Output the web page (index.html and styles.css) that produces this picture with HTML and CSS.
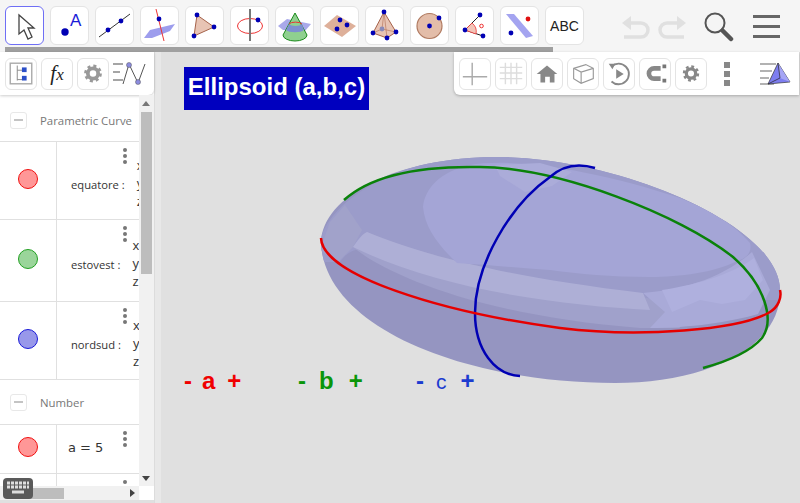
FILE: index.html
```html
<!DOCTYPE html>
<html lang="en">
<head>
    <meta charset="UTF-8">
    <title>Ellipsoid (a,b,c)</title>
    <link rel="stylesheet" href="styles.css">
</head>

<body>
    <div class="app">
        <div class="topbar">
            <div class="tool-area">
                <div class="tools">
                    <div class="tool tool-active">
                        <svg viewBox="0 0 39 39"><path d="M14 9 L14 28 L19 24 L23 33 L27 31 L23 22 L29 22 Z" fill="#fff" stroke="#444" stroke-width="1.3"/></svg>
                    </div>
                    <div class="tool">
                        <svg viewBox="0 0 39 39"><circle cx="15" cy="26" r="3.7" fill="#0000b4"/><text x="20" y="20" class="tool-a">A</text></svg>
                    </div>
                    <div class="tool">
                        <svg viewBox="0 0 39 39"><path d="M4 31 L35 8" stroke="#333" fill="none"/><circle cx="13" cy="24" r="2.4" fill="#0000b4"/><circle cx="26" cy="15" r="2.4" fill="#0000b4"/></svg>
                    </div>
                    <div class="tool">
                        <svg viewBox="0 0 39 39"><path d="M4 32 L10 24 L35 18 L30 25 L12 32 Z" fill="#9d9ded"/><path d="M16 3 L24 35" stroke="#e33" fill="none"/><circle cx="19" cy="13" r="2.4" fill="#0000b4"/></svg>
                    </div>
                    <div class="tool">
                        <svg viewBox="0 0 39 39"><path d="M12 9 L29 21 L9 30 Z" fill="#e8c4b4" stroke="#a5624a"/><circle cx="12" cy="9" r="2.4" fill="#0000b4"/><circle cx="29" cy="21" r="2.4" fill="#0000b4"/><circle cx="9" cy="30" r="2.4" fill="#0000b4"/></svg>
                    </div>
                    <div class="tool">
                        <svg viewBox="0 0 39 39"><ellipse cx="20" cy="20" rx="12.5" ry="7.5" fill="none" stroke="#e33"/><path d="M20 3 V35" stroke="#777" stroke-width="2"/><circle cx="28" cy="14" r="2.4" fill="#0000b4"/></svg>
                    </div>
                    <div class="tool">
                        <svg viewBox="0 0 39 39"><path d="M3 20 L12 13 L36 18 L30 25 L8 24 Z" fill="#a9a9ea"/><path d="M20 7 L32 29 A12 6 0 0 1 8 29 Z" fill="#8fd08f" stroke="#1a8a1a"/><path d="M14 18 A7 3 0 0 0 27 18 L29 24 A10 4 0 0 1 11 24 Z" fill="#7d8fd0"/><path d="M14 18 A7 3 0 0 1 27 18" fill="none" stroke="#e33"/></svg>
                    </div>
                    <div class="tool">
                        <svg viewBox="0 0 39 39"><path d="M4 20 L17 9 L36 20 L22 31 Z" fill="#deb09a"/><circle cx="20" cy="14" r="2.4" fill="#0000b4"/><circle cx="27" cy="19" r="2.4" fill="#0000b4"/><circle cx="17" cy="23" r="2.4" fill="#0000b4"/></svg>
                    </div>
                    <div class="tool">
                        <svg viewBox="0 0 39 39"><path d="M19 6 L8 27 L22 32 L31 26 Z" fill="#e8c4b4" stroke="#a5624a"/><path d="M19 6 L22 32 M8 27 L17 23 L31 26 M19 6 L17 23" fill="none" stroke="#b87a62" stroke-width=".7"/><circle cx="17" cy="23" r="2.4" fill="#8a8ab8"/><circle cx="19" cy="6" r="2.4" fill="#0000b4"/><circle cx="8" cy="27" r="2.4" fill="#0000b4"/><circle cx="22" cy="32" r="2.4" fill="#0000b4"/><circle cx="31" cy="26" r="2.4" fill="#0000b4"/></svg>
                    </div>
                    <div class="tool">
                        <svg viewBox="0 0 39 39"><circle cx="19.5" cy="20" r="12.5" fill="#e3bda9" stroke="#b07a60" stroke-width="1.2"/><circle cx="19.5" cy="20" r="2.4" fill="#0000b4"/><circle cx="29" cy="12" r="2.4" fill="#0000b4"/></svg>
                    </div>
                    <div class="tool">
                        <svg viewBox="0 0 39 39"><path d="M10 24 L25 9 M10 24 L28 30" stroke="#222" fill="none"/><path d="M10 24 L17 17 A11 11 0 0 1 21 28 Z" fill="#f2c4b8" stroke="#e33" stroke-width=".8"/><circle cx="25" cy="9" r="2.4" fill="#0000b4"/><circle cx="10" cy="24" r="2.4" fill="#0000b4"/><circle cx="28" cy="30" r="2.4" fill="#0000b4"/><circle cx="26.5" cy="20" r="1.8" fill="none" stroke="#e33"/></svg>
                    </div>
                    <div class="tool">
                        <svg viewBox="0 0 39 39"><path d="M6 8 L14 8 L33 30 L26 32 Z" fill="#a4a4f0"/><circle cx="28" cy="13" r="2.4" fill="#e01010"/><circle cx="11" cy="27" r="2.4" fill="#0000b4"/></svg>
                    </div>
                    <div class="tool tool-text">ABC</div>
                </div>
                <div class="tools-scroll"></div>
            </div>
            <div class="top-actions">
                <svg class="undo" viewBox="0 0 30 24"><path d="M1 8 L10 1 V15 Z" fill="#e0e0e0"/><path d="M8 8 H20 A7 7 0 0 1 20 22 H3" fill="none" stroke="#e0e0e0" stroke-width="3.5"/></svg>
                <svg class="redo" viewBox="0 0 30 24"><path d="M29 8 L20 1 V15 Z" fill="#e0e0e0"/><path d="M22 8 H10 A7 7 0 0 0 10 22 H27" fill="none" stroke="#e0e0e0" stroke-width="3.5"/></svg>
                <svg class="search" viewBox="0 0 30 30"><circle cx="11" cy="11" r="9.5" fill="none" stroke="#555" stroke-width="2"/><path d="M18.5 18.5 L27 27" stroke="#555" stroke-width="4.5" stroke-linecap="round"/></svg>
                <div class="menu-icon"><span></span><span></span><span></span></div>
            </div>
        </div>

        <div class="main">
            <div class="algebra">
                <div class="algebra-bar">
                    <div class="bar-btn">
                        <svg viewBox="0 0 32 31"><rect x="4.5" y="4.5" width="23" height="22" fill="none" stroke="#aaa" stroke-width="1.5"/><path d="M12 7 V23 M12 12 H18 M12 22 H18" fill="none" stroke="#888"/><rect x="17" y="9" width="5" height="5" fill="#2b4fc8"/><rect x="17" y="18" width="5" height="5" fill="#2b4fc8"/></svg>
                    </div>
                    <div class="bar-btn"><span class="fx">f<span class="fx-x">x</span></span></div>
                    <div class="bar-btn">
                        <svg viewBox="0 0 32 31"><circle cx="16" cy="15.5" r="5.5" fill="none" stroke="#999" stroke-width="4"/><circle cx="16" cy="15.5" r="8" fill="none" stroke="#999" stroke-width="3" stroke-dasharray="3.2 3.1"/></svg>
                    </div>
                    <svg class="bar-view" viewBox="0 0 36 31"><path d="M1 6 H11 M1 14 H8 M1 22 H11" stroke="#888" stroke-width="1.5"/><path d="M11 26 L17 6 L26 25 L33 6" fill="none" stroke="#555"/><circle cx="17" cy="7" r="2.5" fill="#8c8ce0" stroke="#555" stroke-width=".5"/><circle cx="26" cy="24" r="2.5" fill="#8c8ce0" stroke="#555" stroke-width=".5"/></svg>
                </div>

                <div class="algebra-scroll">
                    <div class="list">
                        <div class="group group-first"><span class="toggle"></span>Parametric Curve</div>
                        <div class="row row-78">
                            <div class="marble"><span class="dot dot-red"></span></div>
                            <div class="item-name">equatore :</div>
                            <div class="coords"><span>x</span><span>y</span><span>z</span></div>
                            <div class="kebab"><i></i><i></i><i></i></div>
                        </div>
                        <div class="row row-82">
                            <div class="marble"><span class="dot dot-green"></span></div>
                            <div class="item-name">estovest :</div>
                            <div class="coords"><span>x</span><span>y</span><span>z</span></div>
                            <div class="kebab"><i></i><i></i><i></i></div>
                        </div>
                        <div class="row row-78">
                            <div class="marble"><span class="dot dot-blue"></span></div>
                            <div class="item-name">nordsud :</div>
                            <div class="coords"><span>x</span><span>y</span><span>z</span></div>
                            <div class="kebab"><i></i><i></i><i></i></div>
                        </div>
                        <div class="group"><span class="toggle"></span>Number</div>
                        <div class="row row-49">
                            <div class="marble"><span class="dot dot-red"></span></div>
                            <div class="item-value">a = 5</div>
                            <div class="kebab"><i></i><i></i><i></i></div>
                        </div>
                        <div class="row row-49">
                            <div class="marble"></div>
                            <div class="kebab"><i></i><i></i><i></i></div>
                        </div>
                    </div>
                    <div class="vscroll">
                        <span class="arrow arrow-up"></span>
                        <div class="vthumb"></div>
                        <span class="arrow arrow-down"></span>
                    </div>
                </div>
                <div class="hscroll-row">
                    <div class="hscroll">
                        <span class="arrow arrow-left"></span>
                        <div class="hthumb"></div>
                        <span class="arrow arrow-right"></span>
                    </div>
                </div>
                <div class="keyboard">
                    <svg viewBox="0 0 30 21"><path d="M4 5 H26 M4 9 H26" stroke="#ddd" stroke-width="3" stroke-dasharray="3 1"/><path d="M9 14 H21" stroke="#ddd" stroke-width="3"/></svg>
                </div>
            </div>

            <div class="splitter"></div>

            <div class="graphics">
                <svg class="scene" viewBox="161 52 639 451">
                    <defs>
                        <clipPath id="shape">
                            <path d="M321 243 C322 195 400 156 500 157 C620 158 780 225 780 290 C782 348 705 383 615 383 C470 383 325 330 321 243 Z"/>
                        </clipPath>
                    </defs>
                    <path d="M321 243 C322 195 400 156 500 157 C620 158 780 225 780 290 C782 348 705 383 615 383 C470 383 325 330 321 243 Z" fill="#9595c1"/>
                    <g clip-path="url(#shape)">
                        <path d="M320 240 C335 190 420 150 520 152 C640 155 790 230 790 300 L640 300 C560 290 470 280 400 258 C375 250 355 240 340 262 L322 262 Z" fill="#9b9cca"/>
                        <path d="M320 250 L330 222 L345 205 L362 230 L353 247 L338 262 Z" fill="#a1a2ca"/>
                        <path d="M353 247 C380 270 470 315 640 328 L680 328 L660 300 C560 285 430 260 367 232 Z" fill="#a0a1cb"/>
                        <path d="M353 247 C358 240 362 234 367 232 C420 254 500 276 643 293 L650 310 C560 305 440 290 353 247 Z" fill="#aeafd6"/>
                        <path d="M423 207 C425 188 440 172 470 165 C510 158 590 168 680 198 C710 210 735 225 750 243 C752 252 748 258 735 262 C715 272 680 277 650 277 C610 277 580 274 550 270 C520 268 490 265 457 263 C438 245 425 228 423 207 Z" fill="#a4a5d6"/>
                        <path d="M643 293 C680 290 720 280 752 252 L770 290 L758 314 C730 322 690 328 650 328 L665 312 Z" fill="#a9aad8"/>
                        <path d="M662 290 C690 286 730 276 754 258 L763 280 L745 300 L722 304 L700 300 L672 312 Z" fill="#afb0de"/>
                        <path d="M500 176 L525 192 L552 186 L572 172 L540 163 L495 165 Z" fill="#abacd9"/>
                    </g>
                    <path class="curve curve-green" d="M344 200 C375 172 430 166 480 167 C560 168 680 215 733 257 C765 285 775 320 762 338 C750 352 725 362 703 368"/>
                    <path class="curve curve-blue" d="M595 168 C575 162 560 168 550 177 C510 205 475 265 475 313 C475 350 495 375 520 376"/>
                    <path class="curve curve-red" d="M321 238 C322 275 440 312 560 328 C640 338 740 330 770 312 C778 307 782 298 780 290"/>
                </svg>
                <div class="title">Ellipsoid (a,b,c)</div>
                <div class="sliders">
                    <div class="slider slider-a"><span class="minus">-</span><span class="name">a</span><span class="plus">+</span></div>
                    <div class="slider slider-b"><span class="minus">-</span><span class="name">b</span><span class="plus">+</span></div>
                    <div class="slider slider-c"><span class="minus">-</span><span class="name">c</span><span class="plus">+</span></div>
                </div>
                <div class="view-bar">
                    <div class="bar-btn"><svg viewBox="0 0 32 31"><path d="M3 19 H29 M13 4 V28" stroke="#aaa" stroke-width="1.5"/></svg></div>
                    <div class="bar-btn"><svg viewBox="0 0 32 31"><path d="M4 9 H28 M4 15 H28 M4 21 H28 M10 4 V27 M16 4 V27 M22 4 V27" stroke="#ddd" stroke-width="1.5"/></svg></div>
                    <div class="bar-btn"><svg viewBox="0 0 32 31"><path d="M16 7 L27 16 H24 V25 H19 V19 H14 V25 H9 V16 H5 Z" fill="#888"/></svg></div>
                    <div class="bar-btn"><svg viewBox="0 0 32 31"><path d="M6 10 L19 6 L27 10 L27 21 L14 26 L6 21 Z M6 10 L14 14 L27 10 M14 14 V26" fill="none" stroke="#999" stroke-width="1.2"/></svg></div>
                    <div class="bar-btn"><svg viewBox="0 0 32 31"><path d="M8 8 A11 11 0 1 1 8 24" fill="none" stroke="#888" stroke-width="2"/><path d="M5 5 L12 5 L9 11 Z" fill="#888"/><path d="M13 11 L21 16 L13 21 Z" fill="#888"/></svg></div>
                    <div class="bar-btn"><svg viewBox="0 0 32 31"><path d="M22 10 H15 A5.5 5.5 0 0 0 15 21 H22" fill="none" stroke="#888" stroke-width="5"/><path d="M24 8 H28 M24 23 H28" stroke="#777" stroke-width="4"/></svg></div>
                    <div class="bar-btn"><svg viewBox="0 0 32 31"><circle cx="16" cy="15.5" r="5" fill="none" stroke="#888" stroke-width="3.5"/><circle cx="16" cy="15.5" r="7.5" fill="none" stroke="#888" stroke-width="2.5" stroke-dasharray="3 2.9"/></svg></div>
                    <div class="view-dots"><i></i><i></i><i></i></div>
                    <svg class="bar-view-3d" viewBox="0 0 32 31"><path d="M0 6 H16 M0 13 H12 M0 20 H9 M0 26 H14" stroke="#999" stroke-width="1.5"/><path d="M18 5 L30 24 L8 26 Z" fill="#7d7df0" stroke="#333" stroke-width=".7"/><path d="M18 5 L30 24 L20 20 Z" fill="#a5a5f5"/><path d="M18 5 L20 20 L8 26" fill="none" stroke="#222" stroke-width=".7"/></svg>
                </div>
            </div>
        </div>
    </div>
</body>
</html>
```

FILE: styles.css
```css
html, body {
    margin: 0;
    height: 100%;
    overflow: hidden;
}

body {
    font-family: 'Open Sans', sans-serif;
    background-color: #e0e0e0;
}

svg {
    display: block;
}

.app {
    display: flex;
    flex-direction: column;
    height: 503px;
}

/* top toolbar */
.topbar {
    display: flex;
    height: 52px;
    background-color: #f5f5f5;
}

.tool-area {
    width: 548px;
    margin-left: 5px;
}

.tools {
    display: flex;
    gap: 6px;
    height: 41px;
    padding-top: 6px;
    width: 580px;
}

.tools-scroll {
    height: 5px;
    background-color: #a0a0a0;
}

.tool {
    flex: none;
    width: 39px;
    height: 39px;
    box-sizing: border-box;
    background-color: white;
    border: 1px solid #e4e4e4;
    border-radius: 6px;
}

.tool svg {
    width: 39px;
    height: 39px;
    margin: -1px;
}

.tool-active {
    border: 1.5px solid #6f6ff5;
}

.tool-a {
    font-family: 'Liberation Sans', sans-serif;
    font-size: 17px;
    fill: #1a1ad8;
}

.tool-text {
    display: flex;
    align-items: center;
    justify-content: center;
    font-family: 'Liberation Sans', sans-serif;
    font-size: 14px;
    color: #222;
}

.top-actions {
    display: flex;
    align-items: flex-start;
    margin-left: 68px;
}

.undo, .redo {
    width: 30px;
    height: 24px;
    margin-top: 15px;
}

.redo {
    margin-left: 6px;
}

.search {
    width: 30px;
    height: 30px;
    margin: 12px 0 0 17px;
}

.menu-icon {
    display: flex;
    flex-direction: column;
    gap: 7px;
    margin: 15px 0 0 19px;
}

.menu-icon span {
    display: block;
    width: 27px;
    height: 3px;
    background-color: #666;
}

/* algebra panel */
.main {
    display: flex;
    flex: 1;
    min-height: 0;
}

.algebra {
    position: relative;
    flex: none;
    width: 154px;
    height: 448px;
    background-color: white;
}

.algebra-bar {
    display: flex;
    gap: 4px;
    align-items: center;
    box-sizing: border-box;
    height: 43px;
    padding-left: 5px;
    background-color: white;
    box-shadow: 0 1px 3px rgba(0, 0, 0, 0.2);
    border-radius: 0 0 6px 0;
    position: relative;
}

.bar-btn {
    flex: none;
    display: flex;
    align-items: center;
    justify-content: center;
    width: 32px;
    height: 32px;
    box-sizing: border-box;
    background-color: white;
    border: 1px solid #e4e4e4;
    border-radius: 6px;
}

.bar-btn svg {
    width: 30px;
    height: 29px;
}

.fx {
    font-family: 'Liberation Serif', serif;
    font-style: italic;
    font-size: 21px;
    color: #222;
}

.fx-x {
    font-size: 17px;
}

.bar-view {
    flex: none;
    width: 36px;
    height: 31px;
    margin-left: -1px;
}

.algebra-scroll {
    display: flex;
    height: 391px;
}

.list {
    width: 139px;
    flex: none;
    overflow: hidden;
    color: #333;
}

.group {
    display: flex;
    align-items: center;
    box-sizing: border-box;
    height: 45px;
    padding-left: 10px;
    font-size: 11.4px;
    color: #777;
    white-space: nowrap;
    border-bottom: 1px solid #e0e0e0;
}

.group-first {
    height: 47px;
    padding-top: 5px;
}

.toggle {
    position: relative;
    flex: none;
    width: 15px;
    height: 15px;
    margin-right: 13px;
    border: 1px solid #e8e8e8;
    border-radius: 3px;
}

.toggle::after {
    content: "";
    position: absolute;
    left: 3px;
    top: 6px;
    width: 9px;
    height: 2px;
    background-color: #c4c4c4;
}

.row {
    position: relative;
    display: flex;
    align-items: center;
    box-sizing: border-box;
    border-bottom: 1px solid #e0e0e0;
    overflow: hidden;
    white-space: nowrap;
}

.row-78 {
    height: 78px;
}

.row-82 {
    height: 82px;
}

.row-49 {
    height: 49px;
}

.marble {
    display: flex;
    align-items: center;
    justify-content: center;
    flex: none;
    align-self: stretch;
    box-sizing: content-box;
    width: 56px;
    padding-bottom: 4px;
    border-right: 1px solid #e0e0e0;
}

.dot {
    width: 18px;
    height: 18px;
    border-radius: 50%;
}

.dot-red {
    background-color: #ff9797;
    border: 1px solid #f01010;
}

.dot-green {
    background-color: #9ad59a;
    border: 1px solid #22a022;
}

.dot-blue {
    background-color: #9898ea;
    border: 1px solid #1a1ad8;
}

.item-name {
    flex: none;
    padding: 8px 12px 0 14px;
    font-size: 11.2px;
    color: #333;
}

.item-value {
    padding: 0 0 3px 11px;
    font-family: 'DejaVu Sans', sans-serif;
    font-size: 13px;
    color: #333;
}

.coords {
    display: flex;
    flex-direction: column;
    gap: 2px;
    margin-top: 4px;
    font-size: 13px;
    line-height: 16px;
    color: #333;
}

.coords span {
    display: block;
}

.kebab {
    position: absolute;
    left: 123px;
    top: 6px;
    display: flex;
    flex-direction: column;
    gap: 2px;
}

.kebab i {
    display: block;
    width: 4px;
    height: 4px;
    border-radius: 50%;
    background-color: #777;
}

.vscroll {
    position: relative;
    width: 15px;
    flex: none;
    background-color: #f1f1f1;
}

.vthumb {
    width: 11px;
    height: 162px;
    margin: 17px 0 0 2px;
    background-color: #bdbdbd;
}

.hscroll-row {
    height: 14px;
    background-color: white;
}

.hscroll {
    position: relative;
    width: 139px;
    height: 14px;
    background-color: #f1f1f1;
}

.hthumb {
    width: 43px;
    height: 11px;
    margin-left: 21px;
    position: relative;
    top: 2px;
    background-color: #bdbdbd;
}

.arrow {
    position: absolute;
    width: 0;
    height: 0;
    border-style: solid;
    border-color: transparent;
}

.arrow-up {
    left: 3px;
    top: 6px;
    border-width: 0 4px 5px 4px;
    border-bottom-color: #777;
}

.arrow-down {
    left: 3px;
    bottom: 5px;
    border-width: 5px 4px 0 4px;
    border-top-color: #444;
}

.arrow-left {
    left: 4px;
    top: 3px;
    border-width: 4px 5px 4px 0;
    border-right-color: #777;
}

.arrow-right {
    right: 4px;
    top: 3px;
    border-width: 4px 0 4px 5px;
    border-left-color: #444;
}

.keyboard {
    position: absolute;
    left: 3px;
    top: 426px;
    width: 30px;
    height: 21px;
    border-radius: 4px;
    background-color: #5a5a5a;
}

.splitter {
    flex: none;
    width: 7px;
    background-color: #e8e8e8;
    border-left: 1px solid #dcdcdc;
    box-sizing: border-box;
}

/* graphics view */
.graphics {
    position: relative;
    flex: 1;
    background-color: #e0e0e0;
}

.scene {
    position: absolute;
    left: 0;
    top: 0;
    width: 639px;
    height: 451px;
}

.curve {
    fill: none;
    stroke-width: 2.5;
}

.curve-green {
    stroke: #0a820a;
}

.curve-blue {
    stroke: #0000b4;
}

.curve-red {
    stroke: #e60000;
}

.title {
    position: absolute;
    left: 23px;
    top: 15px;
    width: 185px;
    height: 43px;
    line-height: 40px;
    text-align: center;
    background-color: #0000bf;
    color: white;
    font-family: 'Liberation Sans', sans-serif;
    font-size: 24px;
    font-weight: bold;
    white-space: nowrap;
}

.sliders {
    position: absolute;
    left: 23px;
    top: 315px;
    display: flex;
    font-family: 'Liberation Sans', sans-serif;
    font-weight: bold;
    font-size: 24px;
    line-height: 28px;
}

.slider {
    display: flex;
    align-items: baseline;
}

.slider-a {
    color: #f00000;
    width: 114px;
}

.slider-b {
    color: #0a960a;
    width: 118px;
}

.slider-c {
    color: #1c3cd0;
}

.slider .name {
    margin: 0 12px 0 10px;
}

.slider-b .name {
    margin: 0 15px 0 13px;
}

.slider-c .name {
    margin: 0 14px 0 12px;
    font-weight: normal;
    font-size: 21px;
}

.view-bar {
    position: absolute;
    left: 293px;
    top: 0;
    display: flex;
    align-items: center;
    gap: 4px;
    box-sizing: border-box;
    width: 345px;
    height: 43px;
    padding-left: 5px;
    background-color: white;
    border-radius: 0 0 0 6px;
    box-shadow: 0 1px 3px rgba(0, 0, 0, 0.25);
}

.view-dots {
    display: flex;
    flex-direction: column;
    gap: 3px;
    margin-left: 13px;
}

.view-dots i {
    display: block;
    width: 6px;
    height: 6px;
    background-color: #888;
}

.bar-view-3d {
    flex: none;
    width: 32px;
    height: 31px;
    margin-left: 26px;
}
```
